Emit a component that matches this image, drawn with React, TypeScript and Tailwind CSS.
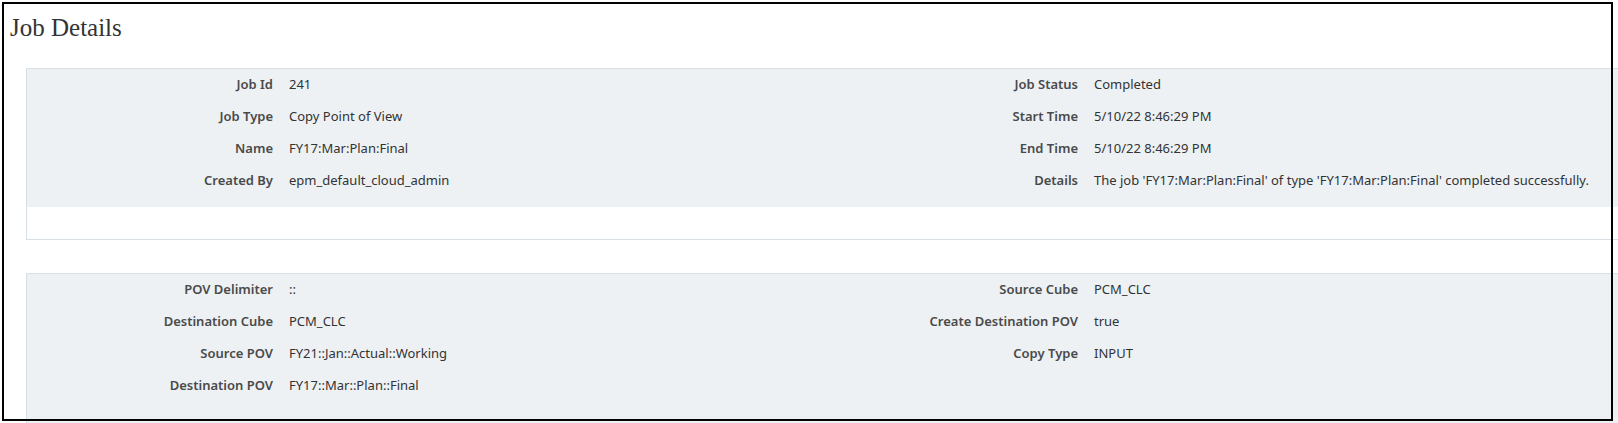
import React from 'react';

type Field = { label: string; value: string };

const jobLeft: Field[] = [
  { label: 'Job Id', value: '241' },
  { label: 'Job Type', value: 'Copy Point of View' },
  { label: 'Name', value: 'FY17:Mar:Plan:Final' },
  { label: 'Created By', value: 'epm_default_cloud_admin' },
];

const jobRight: Field[] = [
  { label: 'Job Status', value: 'Completed' },
  { label: 'Start Time', value: '5/10/22 8:46:29 PM' },
  { label: 'End Time', value: '5/10/22 8:46:29 PM' },
  { label: 'Details', value: "The job 'FY17:Mar:Plan:Final' of type 'FY17:Mar:Plan:Final' completed successfully." },
];

const povLeft: Field[] = [
  { label: 'POV Delimiter', value: '::' },
  { label: 'Destination Cube', value: 'PCM_CLC' },
  { label: 'Source POV', value: 'FY21::Jan::Actual::Working' },
  { label: 'Destination POV', value: 'FY17::Mar::Plan::Final' },
];

const povRight: Field[] = [
  { label: 'Source Cube', value: 'PCM_CLC' },
  { label: 'Create Destination POV', value: 'true' },
  { label: 'Copy Type', value: 'INPUT' },
];

function FieldColumn({ fields }: { fields: Field[] }) {
  return (
    <div className="flex flex-col">
      {fields.map((f) => (
        <div key={f.label} className="flex flex-row items-center h-8">
          <span className="w-[246px] shrink-0 text-right font-semibold text-[#4a4a4a]">{f.label}</span>
          <span className="pl-4 text-[#333333] whitespace-nowrap">{f.value}</span>
        </div>
      ))}
    </div>
  );
}

function DetailPanel({ left, right, footer }: { left: Field[]; right: Field[]; footer?: boolean }) {
  return (
    <div className="w-[1610px] border border-[#d9e0e5] bg-white">
      <div className={`grid grid-cols-[805px_805px] bg-[#edf1f4] ${footer ? 'pb-[10px]' : 'pb-[40px]'}`}>
        <FieldColumn fields={left} />
        <FieldColumn fields={right} />
      </div>
      {footer && <div className="h-8" />}
    </div>
  );
}

export default function App() {
  return (
    <div
      className="relative w-[1618px] h-[423px] overflow-hidden bg-white text-[13px]"
      style={{ fontFamily: '"Noto Sans", Lato, sans-serif' }}
    >
      <div className="pl-[10px] pt-[14px]">
        <h1
          className="text-[25px] leading-[27px] text-[#333333]"
          style={{ fontFamily: 'Georgia, "Liberation Serif", "DejaVu Serif", serif' }}
        >
          Job Details
        </h1>
        <div className="ml-4 mt-[27px] flex flex-col gap-[33px]">
          <DetailPanel left={jobLeft} right={jobRight} footer />
          <DetailPanel left={povLeft} right={povRight} />
        </div>
      </div>
      {/* black frame drawn over the screenshot */}
      <div className="absolute left-[2px] top-[2px] w-[1611px] h-[419px] border-2 border-black pointer-events-none" />
    </div>
  );
}
